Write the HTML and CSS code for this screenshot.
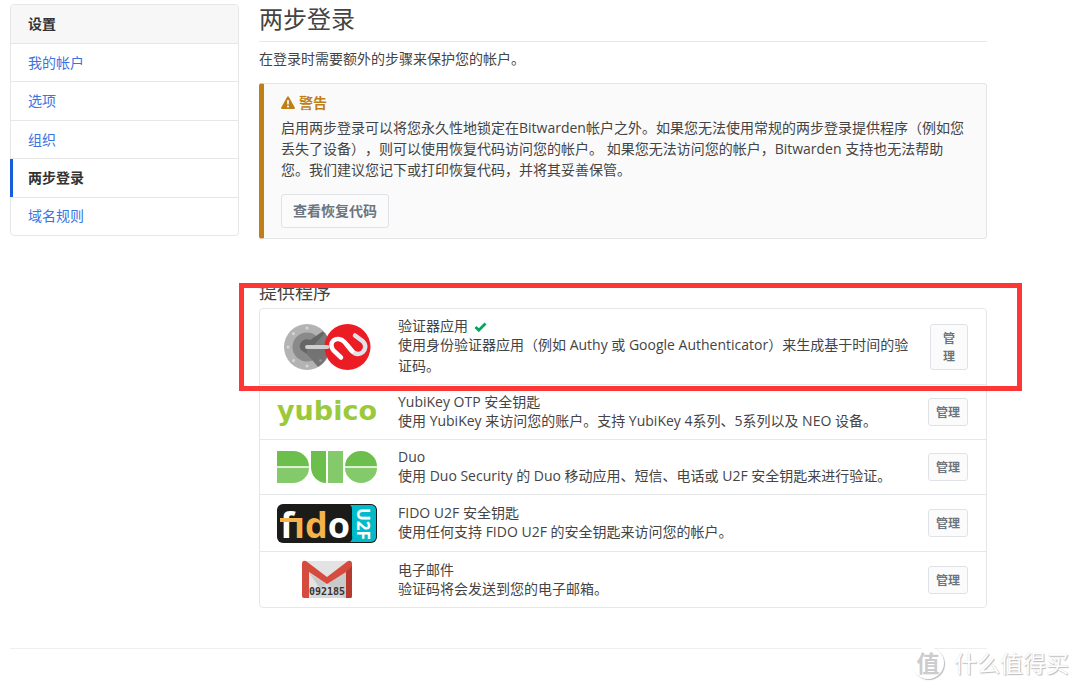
FILE: index.html
```html
<!DOCTYPE html>
<html lang="zh-CN">
<head>
<meta charset="utf-8">
<meta name="viewport" content="width=device-width, initial-scale=1">
<title>两步登录</title>
<link rel="stylesheet" href="styles.css">
</head>
<body>
<div class="page">
  <div class="layout">
    <nav class="card sidebar" aria-label="设置">
      <h2 class="card-header">设置</h2>
      <ul class="menu">
        <li><a href="#">我的帐户</a></li>
        <li><a href="#">选项</a></li>
        <li><a href="#">组织</a></li>
        <li><a href="#" class="active" aria-current="page">两步登录</a></li>
        <li><a href="#">域名规则</a></li>
      </ul>
    </nav>
    <main>
      <h1 class="title">两步登录</h1>
      <p class="intro">在登录时需要额外的步骤来保护您的帐户。</p>
      <section class="callout">
        <h2 class="callout-title">
          <svg width="14" height="14" viewBox="0 0 14 14" aria-hidden="true"><path fill="currentColor" fill-rule="evenodd" d="M6.100.900a1 1 0 0 1 1.800 0l5.900 10.600a1 1 0 0 1-.900 1.500H1.100a1 1 0 0 1-.900-1.500zM6 4.300l.250 4.300h1.500L8 4.300zM7 9.400a1.100 1.100 0 1 0 0 2.200 1.100 1.100 0 0 0 0-2.200z"/></svg>
          警告
        </h2>
        <p class="callout-text">启用两步登录可以将您永久性地锁定在Bitwarden帐户之外。如果您无法使用常规的两步登录提供程序（例如您丢失了设备），则可以使用恢复代码访问您的帐户。 如果您无法访问您的帐户，Bitwarden 支持也无法帮助您。我们建议您记下或打印恢复代码，并将其妥善保管。</p>
        <button type="button" class="btn">查看恢复代码</button>
      </section>
      <h2 class="subtitle">提供程序</h2>
      <ul class="card providers">
        <li class="provider">
          <svg class="logo" width="100" height="48" viewBox="0 0 100 48" aria-hidden="true">
            <circle cx="30" cy="24" r="23" fill="#b3b3b3"/>
            <circle cx="30" cy="24" r="14.500" fill="#8a8a8a"/>
            <path fill="#7b7b7b" d="M30 24 45.500 8.500 48 10A23 23 0 0 1 41 44L30 31z"/>
            <path fill="#666" d="M30 31 24 27A7 7 0 0 1 33 17L45.500 8.500 47.500 10.500 36 23V27L30 31z"/>
            <path fill="#737373" d="M30 26H51A23 23 0 0 1 41 43L30 31z"/>
            <g fill="#d6d6d6"><circle cx="30" cy="5" r="1.500"/><circle cx="16.500" cy="10.500" r="1.500"/><circle cx="11" cy="24" r="1.500"/><circle cx="16.500" cy="37.500" r="1.500"/><circle cx="30" cy="43" r="1.500"/></g>
            <circle cx="43.500" cy="37.500" r="1.300" fill="#999"/>
            <circle cx="70.500" cy="24" r="23" fill="#ec1c24"/>
            <path d="M30 24H50.500" stroke="#cfcfcf" stroke-width="4" stroke-linecap="round"/>
            <path d="M70 22 75 28C82 36 93 26 86 18.500L78 12.500" fill="none" stroke="#e2e3e8" stroke-width="4.500" stroke-linecap="round"/>
            <path d="M64 34.500 57.500 28.500C49 20 60 11 67.500 19L75 28" fill="none" stroke="#fff" stroke-width="4.500" stroke-linecap="round"/>
          </svg>
          <div class="info">
            <h3>验证器应用 <svg class="check" width="13" height="10" viewBox="0 0 13 10" role="img" aria-label="已启用"><path d="M1.500 5 4.800 8.200 11.500 1.500" fill="none" stroke="#00a65a" stroke-width="2.800"/></svg></h3>
            <p>使用身份验证器应用（例如 Authy 或 Google Authenticator）来生成基于时间的验证码。</p>
          </div>
          <button type="button" class="btn btn-sm btn-tall">管理</button>
        </li>
        <li class="provider">
          <svg class="logo" width="100" height="36" viewBox="0 0 100 36" role="img" aria-label="yubico"><text class="yubico" x="0" y="26">yubico</text></svg>
          <div class="info">
            <h3>YubiKey OTP 安全钥匙</h3>
            <p>使用 YubiKey 来访问您的账户。支持 YubiKey 4系列、5系列以及 NEO 设备。</p>
          </div>
          <button type="button" class="btn btn-sm">管理</button>
        </li>
        <li class="provider">
          <svg class="logo" width="100" height="32" viewBox="0 0 100 32" aria-hidden="true">
            <path fill="#6cbf4d" d="M0 0H16A16 15.300 0 0 1 32 15.300H0zM34 0H49V32A15 16 0 0 1 34 16zM68 15.300a16 15.300 0 0 1 32 0z"/>
            <path fill="#84ca6b" d="M0 16.700H32A16 15.300 0 0 1 16 32H0zM51 0H66V32H51zM68 16.700H100a16 15.300 0 0 1-32 0z"/>
          </svg>
          <div class="info">
            <h3>Duo</h3>
            <p>使用 Duo Security 的 Duo 移动应用、短信、电话或 U2F 安全钥匙来进行验证。</p>
          </div>
          <button type="button" class="btn btn-sm">管理</button>
        </li>
        <li class="provider">
          <svg class="logo" width="100" height="40" viewBox="0 0 100 40" role="img" aria-label="fido U2F">
            <rect y="1" width="100" height="39" rx="6" fill="#1b1b19"/>
            <path fill="#00bccb" d="M73 2H94a5 5 0 0 1 5 5V34a5 5 0 0 1-5 5H73q3-2 2-6V7q0-4-2-5z"/>
            <text class="fido" x="3" y="35"><tspan class="white">f</tspan>ıd<tspan class="white">o</tspan></text>
            <path fill="#f5b44b" d="M3 15H24V19H3z"/>
            <text class="u2f" transform="translate(80 5) rotate(90)">U2F</text>
          </svg>
          <div class="info">
            <h3>FIDO U2F 安全钥匙</h3>
            <p>使用任何支持 FIDO U2F 的安全钥匙来访问您的帐户。</p>
          </div>
          <button type="button" class="btn btn-sm">管理</button>
        </li>
        <li class="provider">
          <svg class="logo" width="100" height="39" viewBox="0 0 100 39" role="img" aria-label="092185">
            <path fill="#e3e3e3" d="M27 1H73V38H27z"/>
            <path fill="#c9c9c9" d="M32 13 50 24 69 10V38H50z"/>
            <path fill="#d8d8d8" d="M32 38 50 23 68 38z"/>
            <path fill="#d54b3d" d="M25 4Q25 0 29 1L50 17 71 1Q75 0 75 4V36Q75 38 73 38H69V12L50 24 32 12V38H27Q25 38 25 36z"/>
            <path fill="#b63a30" d="M69 12 75 6V36Q75 38 73 38H69z"/>
            <text class="code" x="32" y="35">092185</text>
          </svg>
          <div class="info">
            <h3>电子邮件</h3>
            <p>验证码将会发送到您的电子邮箱。</p>
          </div>
          <button type="button" class="btn btn-sm">管理</button>
        </li>
      </ul>
    </main>
  </div>
  <footer class="footer"></footer>
</div>
<div class="highlight"></div>
<div class="watermark"><span class="seal">值</span><span>什么值得买</span></div>
</body>
</html>
```

FILE: styles.css
```css
* { box-sizing: border-box; }

body {
  position: relative;
  margin: 0;
  min-height: 100vh;
  background: #fff;
  color: #444;
  font: 14px/21px "Open Sans", "Noto Sans CJK SC", sans-serif;
  text-spacing-trim: space-all;
}

h1, h2, h3, p, ul { margin: 0; padding: 0; font-size: 14px; font-weight: 400; }
ul { list-style: none; }
a { color: #3a74e2; text-decoration: none; }

.page { padding: 4px 93px 0 10px; }

.layout {
  display: grid;
  grid-template-columns: 229px minmax(0, 1fr);
  gap: 20px;
  align-items: start;
}

.card { border: 1px solid #e6e7e9; border-radius: 4px; background: #fff; }

.card-header {
  padding: 8px 17px 9px;
  border-bottom: 1px solid #e6e7e9;
  border-radius: 3px 3px 0 0;
  background: #f7f7f7;
  color: #333;
  font-weight: 700;
}

.menu { display: flex; flex-direction: column; min-height: 191px; }
.menu li { display: flex; flex: 1; }
.menu li + li { border-top: 1px solid #e6e7e9; }
.menu a { display: flex; flex: 1; align-items: center; padding: 0 17px 1px; }
.menu .active {
  margin-left: -1px;
  padding-left: 15px;
  border-left: 3px solid #175ddc;
  color: #333;
  font-weight: 700;
}

.title {
  padding-bottom: 7px;
  border-bottom: 1px solid #e8e8e8;
  font-size: 24px;
  line-height: 30px;
}

.intro { margin: 6px 0 14px; }

.callout {
  padding: 8px 17px 10px;
  border: 1px solid #e4e5e7;
  border-left: 5px solid #bf7e16;
  border-radius: 3px;
  background: #fafafa;
}
.callout-title {
  display: flex;
  align-items: center;
  gap: 4px;
  color: #bf7e16;
  font-weight: 700;
}
.callout-text { margin: 4px 0 14px; }

.btn {
  padding: 6px 11px;
  border: 1px solid #dfe3e7;
  border-radius: 3px;
  background: #fbfbfb;
  color: #6c757d;
  font: 700 14px/20px "Open Sans", "Noto Sans CJK SC", sans-serif;
}
.btn-sm { padding: 5px 7px 3px; font-size: 12px; line-height: 18px; }
.btn-tall { width: 38px; padding: 5px 12px 3px; }

.subtitle { margin: 42px 0 5px; font-size: 18px; line-height: 22px; }

.provider {
  display: grid;
  grid-template-columns: 100px minmax(0, 1fr) auto;
  gap: 21px;
  align-items: center;
  padding: 8px 18px 8px 17px;
}
.provider + .provider { border-top: 1px solid #e6e7e9; }
.info h3 { line-height: 17px; }
.check { margin-left: 2px; vertical-align: -1px; }
.logo { display: block; overflow: visible; }

.yubico { fill: #9aca3c; font: 700 27px "DejaVu Sans", sans-serif; }
.fido { fill: #f5b44b; font: 700 36px "Open Sans", sans-serif; }
.white { fill: #fff; }
.u2f { fill: #fff; font: 700 17px "Open Sans", sans-serif; }
.code { fill: #333; font: 700 10px "DejaVu Sans Mono", monospace; }

.footer { margin-top: 40px; border-top: 1px solid #eee; }

.highlight {
  position: absolute;
  top: 283px;
  left: 239px;
  width: 783px;
  height: 108px;
  border: 5px solid #fd3636;
  pointer-events: none;
}

.watermark {
  position: absolute;
  top: 647px;
  right: 11px;
  display: flex;
  align-items: center;
  gap: 10px;
  color: #fff;
  font-size: 23px;
  line-height: 32px;
  text-shadow: 1px 1px 1px #bbb, 0 0 1px #ccc;
}
.seal {
  width: 32px;
  height: 32px;
  border-radius: 50%;
  background: #fff;
  box-shadow: 1px 1px 1px #bbb;
  color: #ccc;
  font-size: 23px;
  font-weight: 700;
  line-height: 32px;
  text-align: center;
  text-shadow: none;
}
```
